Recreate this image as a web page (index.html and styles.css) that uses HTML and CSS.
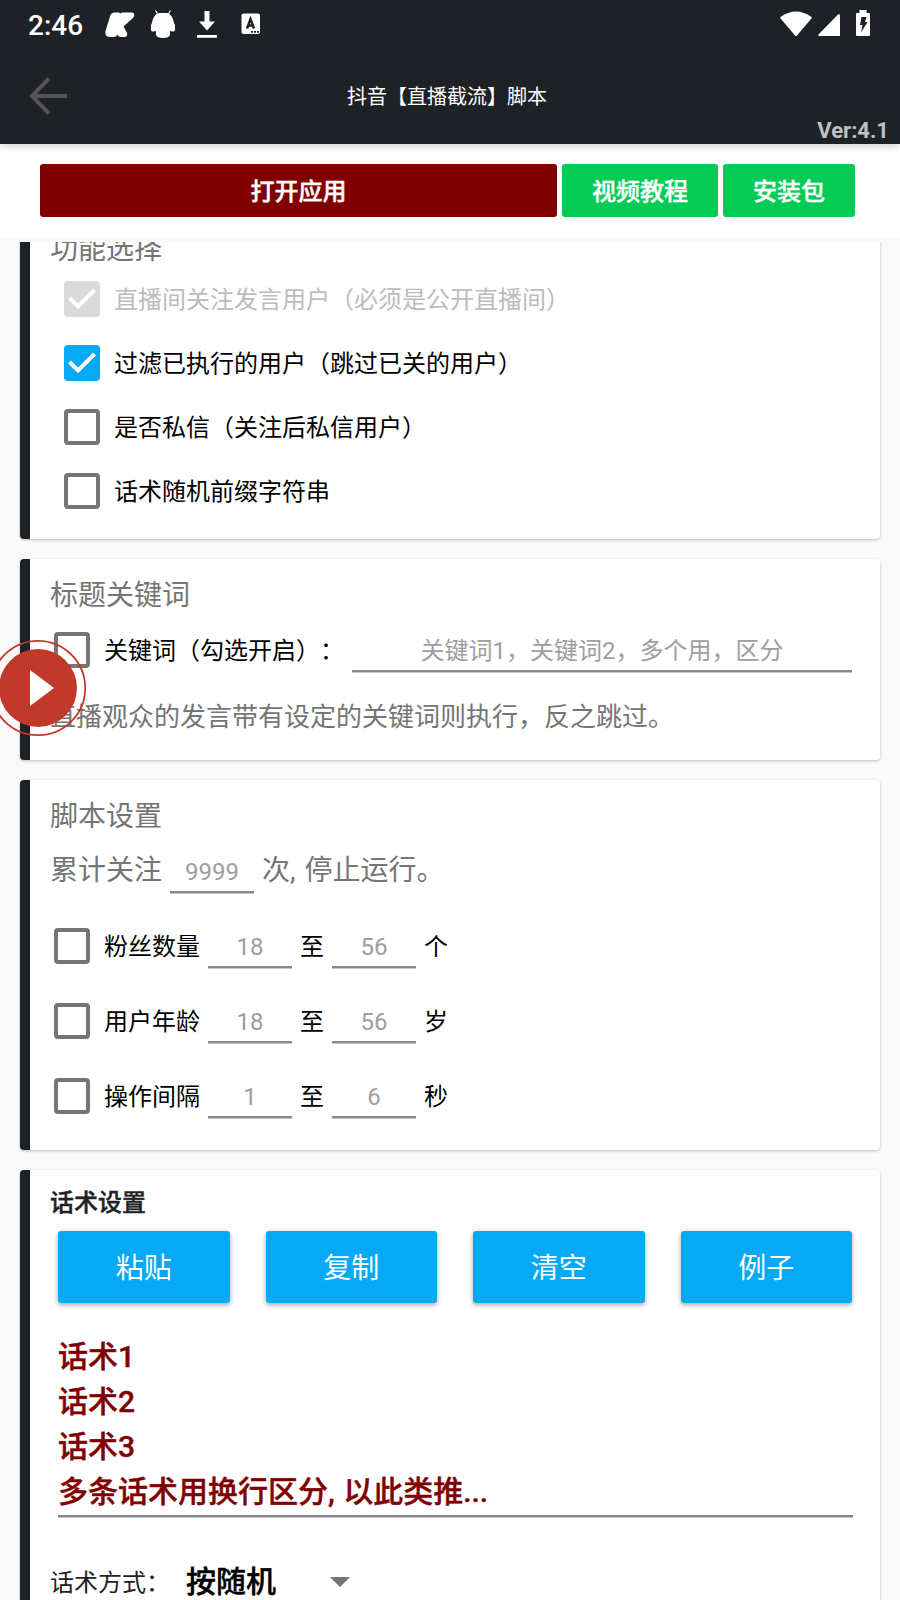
FILE: index.html
```
<!DOCTYPE html>
<html lang="zh-CN">
<head>
<meta charset="UTF-8" />
<meta name="viewport" content="width=device-width, initial-scale=1" />
<title>抖音【直播截流】脚本</title>
<link rel="stylesheet" href="styles.css">
</head>
<body>

<div class="status-bar">
  <span class="clock">2:46</span>
  <svg class="icon-k" width="30" height="26" viewBox="0 0 30 26"><path fill="#fff" d="M9 .5Q6.500 .5 5.500 3L.5 19Q-.5 25 5 25H9Q11 25 12.500 22.500Q13.500 25 16 25H20Q23 24.500 22 21L18.500 14.500L28 6Q31 1.500 27 .5H17L15.500 1.500L14 .5Z"/></svg>
  <svg class="icon-android" width="26" height="30" viewBox="0 0 26 30"><path fill="#fff" d="M2 13C3 6 7 3 9 3H17C19 3 23 6 24 13L25 15V20Q24.500 22 22.500 21.500L20 21V25Q19 28 13 28T6 25V21L3.500 21.500Q1.500 22 1 20V15Z"/><path d="M5.500 .5l2 3M20.500 .5l-2 3" stroke="#fff" stroke-width="1.200"/></svg>
  <svg class="icon-download" width="20" height="28" viewBox="0 0 20 28"><path fill="#fff" d="M7.500 0h5v10.500H18l-8 9-8-9h5.500zM0 24h20v2.700H0z"/></svg>
  <svg class="icon-a" width="20" height="22" viewBox="0 0 20 22"><rect x=".5" y=".5" width="18.500" height="20.500" rx="2" fill="#fff"/><path d="M6 15.500L9.500 6L13 15.500M7 12.500h5" fill="none" stroke="#1e2227" stroke-width="2.400"/><path d="M10 18.800h8.500" stroke="#1e2227" stroke-width="1.800" stroke-dasharray="2 1"/></svg>
  <svg class="icon-wifi" width="32" height="26" viewBox="0 0 32 26"><path fill="#fff" d="M.5 6Q16-5 31.500 6Q32 7 31 8L17 24.500Q16 25.500 15 24.500L1 8Q0 7 .5 6Z"/></svg>
  <svg class="icon-signal" width="22" height="22" viewBox="0 0 22 22"><path fill="#fff" d="M22 1.500V22H1.500Q-.5 22 .5 20.500L20 .500Q22-.5 22 1.500Z"/></svg>
  <svg class="icon-battery" width="14" height="26" viewBox="0 0 14 26"><path fill="#fff" d="M3.500 0h7v3H13q1 0 1 1v21q0 1-1 1H1q-1 0-1-1V4q0-1 1-1h2.500z"/><path fill="#1e2227" d="M5.500 7h5L9 12h2.500L5 22.500L6.500 15H4z"/></svg>
</div>

<header class="title-bar">
  <svg class="back" width="38" height="38" viewBox="0 0 38 38"><path d="M20 1.500L3 19l17 17.500M3 19h35" fill="none" stroke="#555" stroke-width="4"/></svg>
  <h1>抖音【直播截流】脚本</h1>
  <span class="version">Ver:4.1</span>
</header>

<div class="toolbar">
  <button class="open-app">打开应用</button>
  <button class="video">视频教程</button>
  <button class="apk">安装包</button>
</div>

<main class="scroll">
  <section class="card first">
    <h2>功能选择</h2>
    <label class="option disabled"><input type="checkbox" checked disabled /><span>直播间关注发言用户（必须是公开直播间）</span></label>
    <label class="option"><input type="checkbox" checked /><span>过滤已执行的用户（跳过已关的用户）</span></label>
    <label class="option"><input type="checkbox" /><span>是否私信（关注后私信用户）</span></label>
    <label class="option"><input type="checkbox" /><span>话术随机前缀字符串</span></label>
  </section>

  <section class="card">
    <h2>标题关键词</h2>
    <div class="row keyword">
      <label><input type="checkbox" /><span>关键词（勾选开启）：</span></label>
      <input class="field wide" type="text" placeholder="关键词1，关键词2，多个用，区分" />
    </div>
    <p class="hint">直播观众的发言带有设定的关键词则执行，反之跳过。</p>
  </section>

  <section class="card">
    <h2>脚本设置</h2>
    <div class="row total">
      <span>累计关注</span><input class="field" type="text" placeholder="9999" /><span>次, 停止运行。</span>
    </div>
    <div class="row">
      <label><input type="checkbox" /><span>粉丝数量</span></label>
      <input class="field" type="text" placeholder="18" /><span>至</span><input class="field" type="text" placeholder="56" /><span>个</span>
    </div>
    <div class="row">
      <label><input type="checkbox" /><span>用户年龄</span></label>
      <input class="field" type="text" placeholder="18" /><span>至</span><input class="field" type="text" placeholder="56" /><span>岁</span>
    </div>
    <div class="row">
      <label><input type="checkbox" /><span>操作间隔</span></label>
      <input class="field" type="text" placeholder="1" /><span>至</span><input class="field" type="text" placeholder="6" /><span>秒</span>
    </div>
  </section>

  <section class="card">
    <h3>话术设置</h3>
    <div class="actions">
      <button>粘贴</button>
      <button>复制</button>
      <button>清空</button>
      <button>例子</button>
    </div>
    <div class="script-text">话术1<br>话术2<br>话术3<br>多条话术用换行区分, 以此类推...</div>
    <div class="mode">
      <span>话术方式：</span>
      <strong>按随机</strong>
      <svg width="20" height="10" viewBox="0 0 20 10"><path d="M0 0h20L10 10z" fill="#757575"/></svg>
    </div>
  </section>
</main>

<!-- floating run button -->
<svg class="play" width="98" height="98" viewBox="0 0 98 98">
  <circle cx="49" cy="49" r="47.200" fill="none" stroke="#c0392b" stroke-width="1.800"/>
  <circle cx="49" cy="49" r="39" fill="#c0392b"/>
  <path d="M41 31v36l24-18z" fill="#fff"/>
</svg>

</body>
</html>
```
FILE: styles.css
```
* {
  box-sizing: border-box;
}
body {
  margin: 0;
  height: 1600px;
  overflow: hidden;
  display: flex;
  flex-direction: column;
  position: relative;
  background: #fafafa;
  font-family: Roboto, "Noto Sans CJK SC", sans-serif;
  font-size: 24px;
  color: #000;
  text-spacing-trim: space-all;
}
h1, h2, h3, p {
  margin: 0;
  font-weight: normal;
}
button {
  border: none;
  padding: 0 0 2px;
  color: #fff;
  font-family: inherit;
  border-radius: 3px;
}

.status-bar {
  height: 48px;
  flex: none;
  display: flex;
  align-items: flex-start;
  background: #1e2227;
  padding: 10px 30px 0 28px;
}
.clock {
  width: 77px;
  font-size: 28px;
  font-weight: 500;
  line-height: 31px;
  color: #fff;
}
.icon-k { margin-top: 2px; }
.icon-android { margin-left: 15px; }
.icon-download { margin: 1px 0 0 21px; }
.icon-a { margin: 3px 0 0 24px; }
.icon-wifi { margin: 1px 0 0 auto; }
.icon-signal { margin: 4px 0 0 6px; }
.icon-battery { margin-left: 16px; }

.title-bar {
  height: 96px;
  flex: none;
  display: grid;
  grid-template-columns: 118px 1fr 118px;
  align-items: center;
  background: #1e2227;
  color: #fff;
  padding: 0 11px 0 29px;
  box-shadow: 0 2px 8px rgba(0, 0, 0, .2);
  z-index: 1;
}
.title-bar h1 {
  font-size: 20px;
  text-align: center;
  margin: 0 24px 2px 0;
}
.version {
  align-self: end;
  text-align: right;
  font-size: 22px;
  font-weight: bold;
  line-height: 26px;
  color: #c0c0c0;
}

.toolbar {
  height: 93px;
  flex: none;
  display: flex;
  gap: 5px;
  padding: 20px 45px 20px 40px;
  background: #fff;
}
.toolbar button {
  background: #04cb55;
  font-size: 24px;
}
.toolbar .open-app { flex: 1; background: #800000; }
.toolbar .video { width: 156px; }
.toolbar .apk { width: 132px; }

/* medium with a thin stroke, sits between medium and bold */
.toolbar button, h3, .script-text, .mode strong {
  font-weight: 500;
  -webkit-text-stroke: .4px currentColor;
}

.scroll {
  flex: 1;
  min-height: 0;
  margin-top: 5px;
  padding: 0 20px;
  overflow: hidden;
}
.card {
  margin-bottom: 20px;
  padding: 16px 27px 16px 20px;
  background: #fff;
  border-left: 10px solid #1e2227;
  border-radius: 4px;
  box-shadow: 0 1px 3px rgba(0, 0, 0, .25);
}
/* list is scrolled down a little */
.card.first { margin-top: -29px; }

h2 {
  height: 38px;
  font-size: 28px;
  line-height: 42px;
  color: #757575;
}
.option {
  display: flex;
  align-items: center;
  height: 64px;
  padding-left: 14px;
}
.option.disabled { color: #bcbcbc; }
.option span { margin-bottom: 4px; }

input[type="checkbox"] {
  appearance: none;
  flex: none;
  width: 36px;
  height: 36px;
  margin: 0 14px 0 0;
  border: 4px solid #757575;
  border-radius: 4px;
}
input[type="checkbox"]:checked {
  border: none;
  background: #05a9f6 url("data:image/svg+xml,%3Csvg xmlns='http://www.w3.org/2000/svg' viewBox='0 0 36 36'%3E%3Cpath d='M5.500 17l8.500 8.500L30.500 9' fill='none' stroke='white' stroke-width='4'/%3E%3C/svg%3E");
}
input[type="checkbox"]:disabled { background-color: #dadada; }

.row {
  display: flex;
  align-items: center;
  gap: 8px;
  height: 75px;
}
.row label {
  display: flex;
  align-items: center;
  margin-bottom: 2px;
  padding-left: 4px;
}
.row span { margin-bottom: 4px; }
.row label span { margin-bottom: 2px; }
.row.keyword { height: 74px; }
.keyword label { margin-bottom: 0; }
.keyword label span { margin-bottom: 4px; }
.field {
  align-self: flex-start;
  width: 84px;
  height: 44px;
  margin-top: 15px;
  padding: 3px 0 0;
  border: none;
  border-bottom: 2px solid #8a8a8a;
  box-shadow: 0 1px 0 #c4c4c4;
  background: none;
  font-family: inherit;
  font-size: 24px;
  text-align: center;
}
.field::placeholder { color: #9e9e9e; }
.field.wide {
  flex: 1;
  margin-right: 1px;
  padding-top: 4px;
}
.row.total {
  font-size: 28px;
  color: #757575;
  word-spacing: 2px;
}
.total span { margin-bottom: 7px; }
.hint {
  height: 57px;
  font-size: 26px;
  line-height: 60px;
  color: #757575;
}

h3 {
  height: 34px;
  font-size: 24px;
  line-height: 35px;
  color: #1e2227;
}
.actions {
  display: flex;
  gap: 36px;
  padding: 11px 1px 0 8px;
}
.actions button {
  flex: 1;
  height: 72px;
  background: #05a9f6;
  font-size: 28px;
  box-shadow: 0 2px 5px rgba(0, 0, 0, .35);
}
.script-text {
  margin: 31px 0 0 8px;
  height: 183px;
  border-bottom: 2px solid #858585;
  box-shadow: 0 1px 0 #c4c4c4;
  font-size: 30px;
  line-height: 45px;
  word-spacing: 1px;
  color: #800000;
}
.mode {
  display: flex;
  align-items: center;
  height: 70px;
  margin-top: 30px;
  color: #1e2227;
}
.mode span { margin-bottom: 3px; }
.mode strong {
  width: 144px;
  margin: 0 0 7px 16px;
  font-size: 30px;
  color: #000;
}

.play {
  position: absolute;
  left: -11px;
  top: 639px;
  z-index: 2;
}
```
